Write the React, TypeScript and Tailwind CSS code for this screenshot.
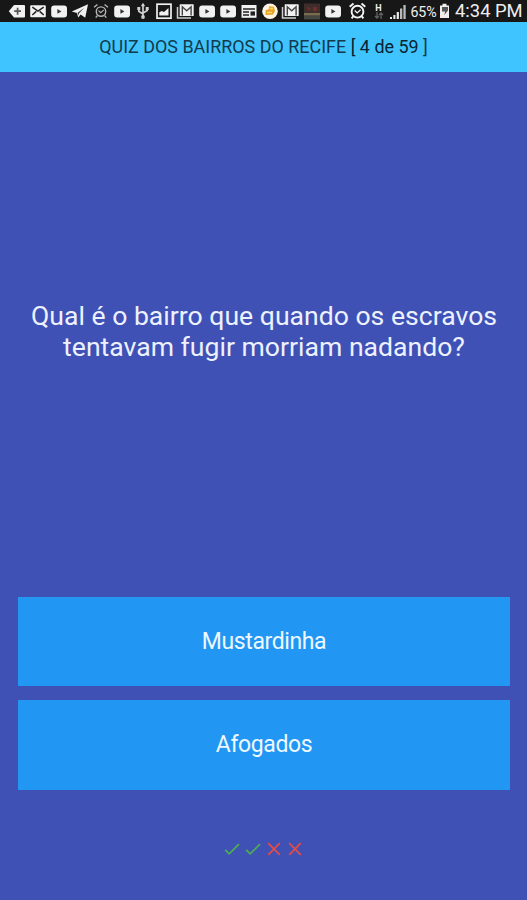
import type { ReactNode } from 'react';

function Glyph({ children, className = 'w-[18px]' }: { children: ReactNode; className?: string }) {
  return (
    <svg viewBox="0 0 18 18" className={`h-[18px] shrink-0 ${className}`} fill="#f1f1f1">
      {children}
    </svg>
  );
}

function BackPlus() {
  return (
    <Glyph>
      <path d="M6 3h10q1 0 1 1v10.4q0 1-1 1H6L.8 9.2z" />
      <path d="M9.6 5.7v7M6.2 9.2h6.8" stroke="#555" strokeWidth="1.7" />
    </Glyph>
  );
}

function Mail() {
  return (
    <Glyph>
      <rect x="1.2" y="3.2" width="15.6" height="12" rx="1" />
      <path d="M3.3 5.2 9 9.2l5.7-4M3.3 13l4-3.6M14.7 13l-4-3.6" fill="none" stroke="#222" strokeWidth="1.5" />
    </Glyph>
  );
}

function Video() {
  return (
    <Glyph>
      <rect x="1.2" y="3.4" width="15.8" height="12" rx="3" />
      <path d="M7.4 7v4.8l4-2.4z" fill="#333" />
    </Glyph>
  );
}

function Telegram() {
  return (
    <Glyph>
      <path d="M.8 9.4 17 2.2 14.2 15.8 9.7 12.6 7.2 15.4 6 10.9z" />
      <path d="M6.6 10.8 13.2 5.8 8 11.4 7.4 13.8z" fill="#444" />
    </Glyph>
  );
}

function Alarm({ bright = false }: { bright?: boolean }) {
  const color = bright ? '#f5f5f5' : '#b5b5b5';
  return (
    <Glyph className={bright ? 'w-[19px]' : 'w-[16px]'}>
      <g fill="none" stroke={color} strokeWidth={bright ? 1.9 : 1.6}>
        <circle cx="9" cy="9.7" r={bright ? 5.9 : 5.3} />
        <path d="M1.2 4.8 5 1.6M16.8 4.8 13 1.6M4.7 14.4l-1.6 2M13.3 14.4l1.6 2" />
        <path d="m6.2 8.5 2.5 2.4 3.4-3.1" strokeWidth="1.3" />
      </g>
    </Glyph>
  );
}

function Usb() {
  return (
    <Glyph>
      <path d="M9 2v13M4.8 6v3.2L9 12M13.2 6v2.5L9 11" fill="none" stroke="#d0d0d0" strokeWidth="1.7" />
      <path d="m9 .7 2.2 3.6H6.8zM3.3 5h3v3h-3zM11.7 5h3v3h-3z" fill="#d0d0d0" />
      <circle cx="9" cy="15" r="1.9" fill="#d0d0d0" />
    </Glyph>
  );
}

function Photo() {
  return (
    <Glyph>
      <rect x="2" y="2.2" width="14" height="14" fill="#171717" stroke="#f1f1f1" strokeWidth="1.7" />
      <path d="M4.3 13.6v-3.4l2.5-1.3 2.2 1.2 4.5-4v7.5z" />
    </Glyph>
  );
}

function MailStack() {
  return (
    <Glyph className="w-[19px]">
      <path d="M1 5v11h13.5" fill="none" stroke="#cfcfcf" strokeWidth="1.5" />
      <rect x="3.2" y="2.2" width="14" height="11.8" rx=".6" />
      <path d="M5.8 13.4V4.8l4.4 4 4.4-4v8.6" fill="none" stroke="#444" strokeWidth="1.4" />
    </Glyph>
  );
}

function News() {
  return (
    <Glyph>
      <path d="M1.5 3h15v12.8h-15z" />
      <path d="M3 7h12M3 10h6M3 13h6" stroke="#202020" strokeWidth="1.3" />
      <path d="M10.5 9.4h4.5v4.2h-4.5z" fill="#202020" />
    </Glyph>
  );
}

function Coins() {
  return (
    <Glyph>
      <circle cx="9" cy="9.3" r="7.8" fill="#fff5e4" />
      <path d="M8.2 4.2 13 4.8l1 4.4-2.2 3.6-7.3.2.2-5 2.8-.6z" fill="#e5a52d" />
      <path d="m8.6 6.6 3.4-.1M6 10.6l5-.1" stroke="#ffd65b" strokeWidth="1.5" />
    </Glyph>
  );
}

function Thumbnail() {
  return (
    <Glyph>
      <path d="M1 1.5h16v15.8H1z" fill="#3f2d2b" />
      <path d="M1 11h16v2.6H1z" fill="#786b4f" />
      <path d="M1 13.6h16v3.7H1z" fill="#454840" />
      <path d="m4 4 4 3-3 2zM10 5h4v4h-4z" fill="#6b302c" />
    </Glyph>
  );
}

const notifications = [
  BackPlus, Mail, Video, Telegram, Alarm, Video, Usb, Photo,
  MailStack, Video, Video, News, Coins, MailStack, Thumbnail, Video,
];

function StatusBar() {
  return (
    <div className="flex h-[22px] shrink-0 items-center bg-[#171717] pl-[6.5px] text-[#eee]">
      {notifications.map((Icon, i) => (
        <div key={i} className="flex w-[21.07px] shrink-0 justify-center">
          <Icon />
        </div>
      ))}
      <div className="ml-[4px] flex shrink-0"><Alarm bright /></div>
      <div className="ml-[7px] flex w-[10px] shrink-0 flex-col items-center text-[9px] leading-[8px] font-bold">
        <span>H</span>
        <svg viewBox="0 0 10 7" className="h-[7px] w-[10px]" fill="none" stroke="#626262" strokeWidth="1.3">
          <path d="M3 0v6M1 4l2 2 2-2M7 7V1M5 3l2-2 2 2" />
        </svg>
      </div>
      <svg viewBox="0 0 16 16" className="mt-[2px] ml-[6.5px] h-[16px] w-[16px] shrink-0" fill="#eee">
        <path d="M0 13h2v2H0zM3.4 11h2v4h-2zM6.7 8h2.2v7H6.7z" />
        <path d="M10 4.5h2.3V15H10zM13.4 1h2.3v14h-2.3z" fill="#b9b9b9" />
      </svg>
      <span className="ml-[4.5px] w-[28px] shrink-0 pt-px text-[14.2px] leading-5 tracking-[-0.1px] whitespace-nowrap">65%</span>
      <svg viewBox="0 0 11 16" className="ml-[0.5px] h-[16px] w-[11px] shrink-0">
        <path d="M1 2.5h2.5V.8h4v1.7H10V15H1z" fill="#eee" />
        <path d="M3 4h6v3.5L5.3 12l.8-3.5H3z" fill="#555" />
      </svg>
      <span className="ml-[5px] shrink-0 text-[18.4px] leading-5 whitespace-nowrap">4:34 PM</span>
    </div>
  );
}

function Result({ correct }: { correct: boolean }) {
  return (
    <svg viewBox="0 0 16 14" className="h-[14px] w-[16px]" fill="none" strokeWidth="1.7">
      {correct ? (
        <path d="m1.2 7.8 4 4L15 2.2" stroke="#4caf50" />
      ) : (
        <path d="m2.2 1.2 11.6 11.6M13.8 1.2 2.2 12.8" stroke="#e64c45" />
      )}
    </svg>
  );
}

export default function App() {
  return (
    <main className="flex h-[900px] w-[527px] flex-col overflow-hidden bg-[#3f51b5] font-[Roboto,sans-serif]">
      <StatusBar />
      <header className="flex h-[50px] shrink-0 items-center justify-center bg-[#40c4ff] pt-px text-[17.95px] text-[#123a4b]">
        <h1 className="whitespace-nowrap">QUIZ DOS BAIRROS DO RECIFE <span className="text-[#082331]">[ 4 de 59</span> ]</h1>
      </header>
      <section className="flex h-[524.5px] shrink-0 items-center justify-center pb-[7px] pl-px text-center">
        <p className="text-[26.6px] leading-[31px] whitespace-nowrap text-[#edf1ff]">
          Qual é o bairro que quando os escravos<br />tentavam fugir morriam nadando?
        </p>
      </section>
      <div className="flex shrink-0 flex-col gap-[14px] pr-[17px] pl-[18px] text-[23px] tracking-[-0.4px] text-[#edf8ff]">
        <button className="h-[89.5px] bg-[#2196f3] pt-px">Mustardinha</button>
        <button className="h-[89.5px] bg-[#2196f3] pt-px">Afogados</button>
      </div>
      <footer className="flex flex-1 items-center justify-center gap-[5px] pt-[8px]">
        <Result correct />
        <Result correct />
        <Result correct={false} />
        <Result correct={false} />
      </footer>
    </main>
  );
}
